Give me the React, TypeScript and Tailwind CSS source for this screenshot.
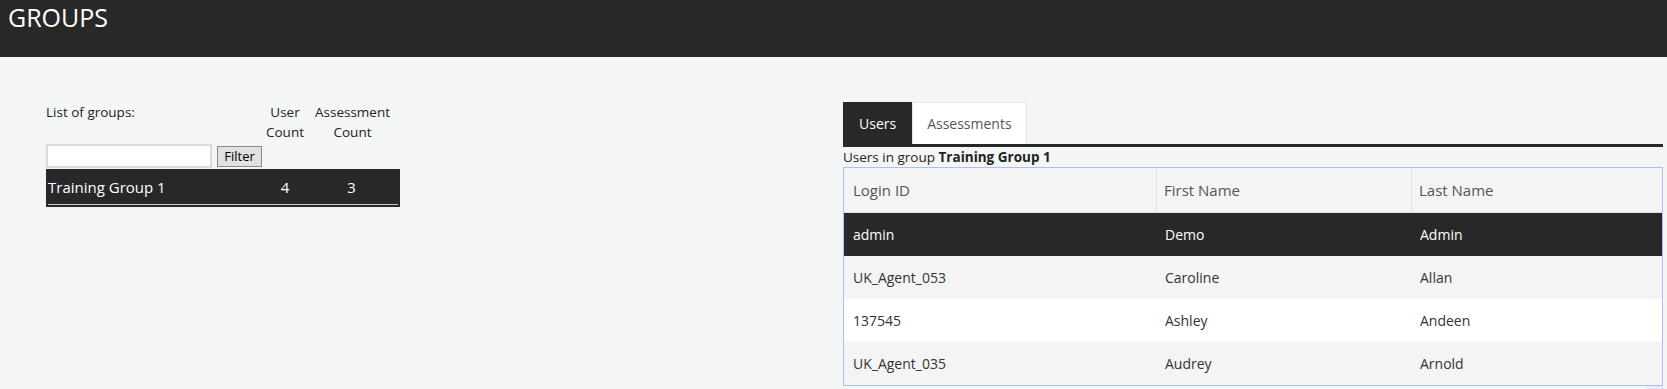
import React from 'react';

const users = [
    { login: 'admin', first: 'Demo', last: 'Admin' },
    { login: 'UK_Agent_053', first: 'Caroline', last: 'Allan' },
    { login: '137545', first: 'Ashley', last: 'Andeen' },
    { login: 'UK_Agent_035', first: 'Audrey', last: 'Arnold' },
];

export default function App() {
    return (
        <div className="min-h-screen bg-[#f4f6f5] font-['Open_Sans',sans-serif] text-[#222]">
            <header className="h-[57px] bg-[#282828] px-[8px] pt-[5px]">
                <h1 className="text-[25px] leading-none text-white">GROUPS</h1>
            </header>

            <main className="flex pt-[45px]">
                {/* group list */}
                <section className="w-[843px] shrink-0 pl-[46px]">
                    <div className="flex text-[13.5px] leading-[20px]">
                        <div className="w-[219px]">List of groups:</div>
                        <div className="w-[40px] whitespace-nowrap text-center">
                            User
                            <br />
                            Count
                        </div>
                        <div className="w-[95px] whitespace-nowrap text-center">
                            Assessment
                            <br />
                            Count
                        </div>
                    </div>
                    <div className="mt-[2px] flex items-start">
                        <input type="text" className="h-[24px] w-[166px] border-2 border-[#dadada] bg-white outline-none" />
                        <button
                            type="button"
                            className="ml-[5px] mt-[2px] h-[21px] w-[45px] border border-[#8a8a8a] bg-[#e1e1e1] text-[13px] leading-none text-black"
                        >
                            Filter
                        </button>
                    </div>
                    <div className="mt-[1px] w-[354px] bg-[#282828] p-[2px] text-white">
                        <div className="flex h-[34px] items-center border-b border-[#c8c8c8] text-[15px]">
                            <div className="w-[217px]">Training Group 1</div>
                            <div className="w-[40px] text-center">4</div>
                            <div className="w-[93px] text-center">3</div>
                        </div>
                    </div>
                </section>

                {/* group detail */}
                <section className="flex-1 pr-[4px]">
                    <div className="flex text-[14px]">
                        <div className="flex h-[42px] items-center bg-[#282828] px-[16px] text-white">Users</div>
                        <div className="flex h-[42px] items-center border border-b-0 border-[#e6e6e6] bg-white px-[14px] text-[#555]">
                            Assessments
                        </div>
                    </div>
                    <div className="h-[3px] bg-[#282828]" />
                    <p className="text-[13.5px] leading-[20px]">
                        Users in group <span className="font-bold">Training Group 1</span>
                    </p>

                    <div className="border border-[#a6c3ef]">
                        <div className="grid h-[45px] grid-cols-[313px_255px_1fr] border-b border-[#e0e0e0] bg-[#f4f4f4] text-[15px] text-[#555]">
                            <div className="flex items-center border-r border-[#e2e2e2] pl-[9px]">Login ID</div>
                            <div className="flex items-center border-r border-[#e2e2e2] pl-[7px]">First Name</div>
                            <div className="flex items-center pl-[7px]">Last Name</div>
                        </div>
                        {users.map((u, i) => (
                            <div
                                key={u.login}
                                className={
                                    i === 0
                                        ? 'grid h-[43px] grid-cols-[313px_255px_1fr] bg-[#282828] text-[14px] text-white'
                                        : i % 2 === 1
                                          ? 'grid h-[43px] grid-cols-[313px_255px_1fr] bg-[#f4f4f4] text-[14px] text-[#333]'
                                          : 'grid h-[43px] grid-cols-[313px_255px_1fr] bg-white text-[14px] text-[#333]'
                                }
                            >
                                <div className="flex items-center pl-[9px]">{u.login}</div>
                                <div className="flex items-center pl-[8px]">{u.first}</div>
                                <div className="flex items-center pl-[8px]">{u.last}</div>
                            </div>
                        ))}
                    </div>
                    <div className="flex justify-end">
                        <div className="h-[10px] w-[18px] bg-[#ececec]" />
                    </div>
                </section>
            </main>
        </div>
    );
}
